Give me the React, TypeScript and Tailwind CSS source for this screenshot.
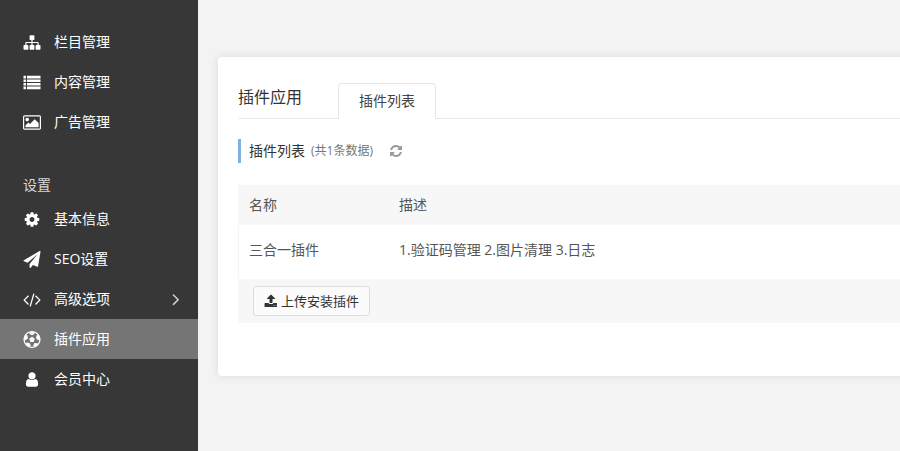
import type { ReactNode } from 'react';

type IconProps = { d: string; className?: string; viewBox?: string };

const Icon = ({ d, className, viewBox = '0 0 1792 1792' }: IconProps) => (
  <svg viewBox={viewBox} className={className} fill="currentColor" aria-hidden="true">
    <path d={d} />
  </svg>
);

const icons = {
  sitemap: 'M1792 1248v320q0 40-28 68t-68 28h-320q-40 0-68-28t-28-68v-320q0-40 28-68t68-28h96v-192h-512v192h96q40 0 68 28t28 68v320q0 40-28 68t-68 28h-320q-40 0-68-28t-28-68v-320q0-40 28-68t68-28h96v-192h-512v192h96q40 0 68 28t28 68v320q0 40-28 68t-68 28h-320q-40 0-68-28t-28-68v-320q0-40 28-68t68-28h96v-192q0-52 38-90t90-38h512v-192h-96q-40 0-68-28t-28-68v-320q0-40 28-68t68-28h320q40 0 68 28t28 68v320q0 40-28 68t-68 28h-96v192h512q52 0 90 38t38 90v192h96q40 0 68 28t28 68z',
  list: 'M0 192h256v270h-256zM0 570h256v270h-256zM0 948h256v270h-256zM0 1326h256v270h-256zM360 192h1432v270h-1432zM360 570h1432v270h-1432zM360 948h1432v270h-1432zM360 1326h1432v270h-1432z',
  picture: 'M576 576q0 80-56 136t-136 56-136-56-56-136 56-136 136-56 136 56 56 136zm1024 384v448h-1408v-192l320-320 160 160 512-512zm96-704h-1600q-13 0-22.5 9.5t-9.5 22.5v1216q0 13 9.5 22.5t22.5 9.5h1600q13 0 22.5-9.5t9.5-22.5v-1216q0-13-9.5-22.5t-22.5-9.5zm160 32v1216q0 66-47 113t-113 47h-1600q-66 0-113-47t-47-113v-1216q0-66 47-113t113-47h1600q66 0 113 47t47 113z',
  cog: 'M1152 896q0-106-75-181t-181-75-181 75-75 181 75 181 181 75 181-75 75-181zm512-109v222q0 12-8 23t-20 13l-185 28q-19 54-39 91 35 50 107 138 10 12 10 25t-9 23q-27 37-99 108t-94 71q-12 0-26-9l-138-108q-44 23-91 38-16 136-29 186-7 28-36 28h-222q-14 0-24.5-8.5t-11.5-21.5l-28-184q-49-16-90-37l-141 107q-10 9-25 9-14 0-25-11-126-114-165-168-7-10-7-23 0-12 8-23 15-21 51-66.5t54-70.5q-27-50-41-99l-183-27q-13-2-21-12.5t-8-23.5v-222q0-12 8-23t19-13l186-28q14-46 39-92-40-57-107-138-10-12-10-24 0-10 9-23 26-36 98.5-107.5t94.5-71.5q13 0 26 10l138 107q44-23 91-38 16-136 29-186 7-28 36-28h222q14 0 24.5 8.5t11.5 21.5l28 184q49 16 90 37l142-107q9-9 24-9 13 0 25 10 129 119 165 170 7 8 7 22 0 12-8 23-15 21-51 66.5t-54 70.5q26 50 41 98l183 28q13 2 21 12.5t8 23.5z',
  plane: 'M1764 11q33 24 27 64l-256 1536q-5 29-32 45-14 8-31 8-11 0-24-5l-453-185-242 295q-18 23-49 23-13 0-22-4-19-7-30.5-23.5t-11.5-36.5v-349l864-1059-1069 925-395-162q-37-14-40-55-2-40 32-59l1664-960q15-9 32-9 20 0 36 11z',
  code: 'M553 1399l-50 50q-10 10-23 10t-23-10l-466-466q-10-10-10-23t10-23l466-466q10-10 23-10t23 10l50 50q10 10 10 23t-10 23l-393 393 393 393q10 10 10 23t-10 23zm591-1067l-373 1291q-4 13-15.5 19.5t-23.5 2.5l-62-17q-13-4-19.5-15.5t-2.5-24.5l373-1291q4-13 15.5-19.5t23.5-2.5l62 17q13 4 19.5 15.5t2.5 24.5zm657 651l-466 466q-10 10-23 10t-23-10l-50-50q-10-10-10-23t10-23l393-393-393-393q-10-10-10-23t10-23l50-50q10-10 23-10t23 10l466 466q10 10 10 23t-10 23z',
  football: 'M609 816l287-208 287 208-109 336h-355zm287-816q182 0 348 71t286 191 191 286 71 348-71 348-191 286-286 191-348 71-348-71-286-191-191-286-71-348 71-348 191-286 286-191 348-71zm619 1350q149-203 149-454v-3l-102 89-240-224 63-323 134 12q-150-206-389-282l53 124-287 159-287-159 53-124q-239 76-389 282l135-12 62 323-240 224-102-89v3q0 251 149 454l30-132 326 40 139 298-116 69q117 39 240 39t240-39l-116-69 139-298 326 40z',
  user: 'M1536 1399q0 109-62.5 187t-150.5 78h-854q-88 0-150.5-78t-62.5-187q0-85 8.5-160.5t31.5-152 58.5-131 94-89 134.5-34.5q131 128 313 128t313-128q76 0 134.5 34.5t94 89 58.5 131 31.5 152 8.5 160.5zm-256-887q0 159-112.5 271.5t-271.5 112.5-271.5-112.5-112.5-271.5 112.5-271.5 271.5-112.5 271.5 112.5 112.5 271.5z',
  angleRight: 'M1171 960q0 13-10 23l-466 466q-10 10-23 10t-23-10l-50-50q-10-10-10-23t10-23l393-393-393-393q-10-10-10-23t10-23l50-50q10-10 23-10t23 10l466 466q10 10 10 23z',
  refresh: 'M1639 1056q0 5-1 7-64 268-268 434.5t-478 166.5q-146 0-282.5-55t-243.5-157l-129 129q-19 19-45 19t-45-19-19-45v-448q0-26 19-45t45-19h448q26 0 45 19t19 45-19 45l-137 137q71 66 161 102t187 36q134 0 250-65t186-179q11-17 53-117 8-23 30-23h192q13 0 22.5 9.5t9.5 22.5zm25-800v448q0 26-19 45t-45 19h-448q-26 0-45-19t-19-45 19-45l138-138q-148-137-349-137-134 0-250 65t-186 179q-11 17-53 117-8 23-30 23h-199q-13 0-22.5-9.5t-9.5-22.5v-7q65-268 270-434.5t480-166.5q146 0 284 55.5t245 156.5l130-129q19-19 45-19t45 19 19 45z',
  upload: 'M1344 1472q0-26-19-45t-45-19-45 19-19 45 19 45 45 19 45-19 19-45zm256 0q0-26-19-45t-45-19-45 19-19 45 19 45 45 19 45-19 19-45zm128-224v320q0 40-28 68t-68 28h-1472q-40 0-68-28t-28-68v-320q0-40 28-68t68-28h427q21 56 70.5 92t110.5 36h256q61 0 110.5-36t70.5-92h427q40 0 68 28t28 68zm-325-648q-17 40-59 40h-256v448q0 26-19 45t-45 19h-256q-26 0-45-19t-19-45v-448h-256q-42 0-59-40-17-39 14-69l448-448q18-19 45-19t45 19l448 448q31 30 14 69z',
};

type Item = { icon: string; label: string; viewBox?: string; active?: boolean; more?: boolean };

const content: Item[] = [
  { icon: icons.sitemap, label: '栏目管理' },
  { icon: icons.list, label: '内容管理' },
  { icon: icons.picture, label: '广告管理', viewBox: '-64 0 1920 1792' },
];

const settings: Item[] = [
  { icon: icons.cog, label: '基本信息' },
  { icon: icons.plane, label: 'SEO设置' },
  { icon: icons.code, label: '高级选项', viewBox: '-32 0 1856 1792', more: true },
  { icon: icons.football, label: '插件应用', active: true },
  { icon: icons.user, label: '会员中心' },
];

const Menu = ({ items }: { items: Item[] }) => (
  <ul>
    {items.map((item) => (
      <li key={item.label}>
        <a
          href="#"
          aria-current={item.active ? 'page' : undefined}
          className={`flex h-10 items-center pr-3 pl-[23px] text-white ${item.active ? 'bg-[#757575]' : ''}`}
        >
          <Icon d={item.icon} viewBox={item.viewBox} className="mr-[13px] h-[17px] w-[18px]" />
          <span className="flex-1">{item.label}</span>
          {item.more && <Icon d={icons.angleRight} className="size-5 text-[#d0d0d0]" />}
        </a>
      </li>
    ))}
  </ul>
);

const Th = ({ children }: { children: ReactNode }) => (
  <th scope="col" className="h-10 px-[11px] text-left font-normal">{children}</th>
);

const App = () => {
  return (
    <div className="flex min-h-screen bg-[#f3f3f3] font-['Open_Sans','Noto_Sans_CJK_SC',sans-serif] text-sm text-[#333]">
      <nav className="w-[198px] shrink-0 bg-[#373737] pt-[22px]">
        <Menu items={content} />
        <h2 className="mt-[33px] mb-1 pl-[23px] text-[#d8d8d8]">设置</h2>
        <Menu items={settings} />
      </nav>

      <main className="min-w-0 flex-1 overflow-hidden pt-[57px] pl-5">
        <section className="-mr-5 rounded bg-white pt-[26px] pr-5 pb-[53px] pl-5 shadow-[0_0_10px_rgba(0,0,0,0.1)]">
          <header className="-mr-5 flex border-b border-[#e9e9e9]">
            <h1 className="w-[100px] pt-0.5 text-base">插件应用</h1>
            <a href="#" className="-mb-px rounded-t border border-b-0 border-[#e6e6e6] bg-white px-5 pt-[7px] pb-2 text-[#444]">
              插件列表
            </a>
          </header>

          <div className="mt-5 mb-[22px] flex h-6 items-center border-l-3 border-[#7eb3e0] pl-2">
            <h2>插件列表</h2>
            <small className="ml-1.5 text-xs text-[#777]">(共1条数据)</small>
            <button type="button" aria-label="刷新" className="ml-4 text-[#999]">
              <Icon d={icons.refresh} className="size-3.5" />
            </button>
          </div>

          <table className="w-full table-fixed border-separate border-spacing-0 text-[#555]">
            <colgroup>
              <col className="w-[150px]" />
              <col />
            </colgroup>
            <thead className="bg-[#f7f7f7]">
              <tr>
                <Th>名称</Th>
                <Th>描述</Th>
              </tr>
            </thead>
            <tbody>
              <tr>
                <td className="h-[54px] border-l border-[#f5f5f5] px-2.5 pb-1">三合一插件</td>
                <td className="px-[11px] pb-1">1.验证码管理 2.图片清理 3.日志</td>
              </tr>
            </tbody>
            <tfoot className="bg-[#f7f7f7]">
              <tr>
                <td colSpan={2} className="h-11 pl-[15px]">
                  <button
                    type="button"
                    className="flex h-[30px] items-center gap-1 rounded-[3px] border border-[#ddd] bg-[#fbfbfb] px-2.5 text-[13px] text-[#333]"
                  >
                    <Icon d={icons.upload} className="h-3.5 w-[13px]" viewBox="0 0 1664 1792" />
                    上传安装插件
                  </button>
                </td>
              </tr>
            </tfoot>
          </table>
        </section>
      </main>
    </div>
  );
};

export default App;
